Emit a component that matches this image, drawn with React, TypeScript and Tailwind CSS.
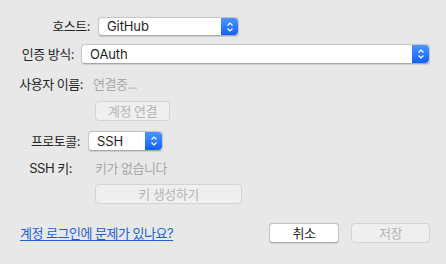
import React from "react";

const font = { fontFamily: 'Inter, "Noto Sans CJK KR", sans-serif' };

function Stepper() {
  return (
    <div className="flex h-full w-[17px] shrink-0 items-center justify-center rounded-r-[4px] bg-gradient-to-b from-[#4b95ff] to-[#0f60fd]">
      <svg width="8" height="12" viewBox="0 0 8 12" fill="none">
        <path d="M1.5 4.5 L4 2 L6.5 4.5" stroke="white" strokeWidth="1.2" />
        <path d="M1.5 7.5 L4 10 L6.5 7.5" stroke="white" strokeWidth="1.2" />
      </svg>
    </div>
  );
}

function Popup({ label, w, h }: { label: string; w: string; h: string }) {
  return (
    <div
      className={`flex ${w} ${h} items-stretch rounded-[4px] border border-[#c6c6c6] border-b-[#a8a8a8] bg-white shadow-[0_0.5px_1px_rgba(0,0,0,0.12)]`}
    >
      <div className="flex flex-1 items-center pl-[8px] text-[13px] tracking-[-0.1px] text-[#1e1e1e]">{label}</div>
      <Stepper />
    </div>
  );
}

export default function App() {
  return (
    <div
      className="flex h-[264px] w-[446px] flex-col bg-[#e8e8e8] text-[13px] leading-none tracking-[-0.5px] text-[#262626]"
      style={font}
    >
      <div className="mt-[17px] flex h-[19px] items-center">
        <span className="w-[90px] shrink-0 text-right">호스트:</span>
        <div className="ml-[8px]">
          <Popup label="GitHub" w="w-[141px]" h="h-[19px]" />
        </div>
      </div>

      <div className="mt-[8px] flex h-[20px] items-center">
        <span className="w-[74px] shrink-0 text-right">인증 방식:</span>
        <div className="ml-[7px]">
          <Popup label="OAuth" w="w-[349px]" h="h-[20px]" />
        </div>
      </div>

      <div className="mt-[10px] flex h-[20px] items-center">
        <span className="w-[83px] shrink-0 text-right">사용자 이름:</span>
        <span className="ml-[10px] text-[#a8a8a8]">연결중...</span>
      </div>

      <div className="mt-[7px] flex h-[20px] items-center pl-[95px]">
        <div className="flex h-[20px] w-[75px] items-center justify-center rounded-[4px] border border-[#d4d4d4] bg-[#efefef] text-[#b4b4b4]">
          계정 연결
        </div>
      </div>

      <div className="mt-[10px] flex h-[20px] items-center">
        <span className="w-[80px] shrink-0 text-right">프로토콜:</span>
        <div className="ml-[8px]">
          <Popup label="SSH" w="w-[75px]" h="h-[20px]" />
        </div>
      </div>

      <div className="mt-[7px] flex h-[20px] items-center">
        <span className="w-[72px] shrink-0 text-right">SSH 키:</span>
        <span className="ml-[23px] text-[#a8a8a8]">키가 없습니다</span>
      </div>

      <div className="mt-[6px] flex h-[20px] items-center pl-[95px]">
        <div className="flex h-[20px] w-[147px] items-center justify-center rounded-[4px] border border-[#d4d4d4] bg-[#efefef] text-[#b4b4b4]">
          키 생성하기
        </div>
      </div>

      <div className="mt-[19px] flex h-[20px] items-center pl-[20px] pr-[16px]">
        <span className="text-[#1d5fd0] underline underline-offset-2">계정 로그인에 문제가 있나요?</span>
        <div className="ml-auto flex items-center gap-[12px]">
          <div className="flex h-[20px] w-[70px] items-center justify-center rounded-[4px] border border-[#c4c4c4] border-b-[#ababab] bg-white text-[#1e1e1e] shadow-[0_0.5px_1px_rgba(0,0,0,0.1)]">
            취소
          </div>
          <div className="flex h-[20px] w-[79px] items-center justify-center rounded-[4px] border border-[#d4d4d4] bg-[#efefef] text-[#b4b4b4]">
            저장
          </div>
        </div>
      </div>
    </div>
  );
}
